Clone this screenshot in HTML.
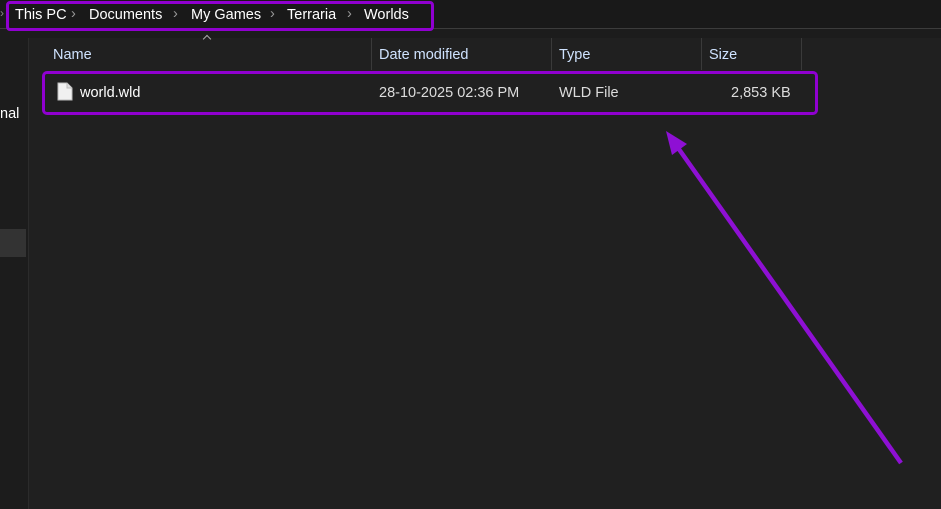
<!DOCTYPE html>
<html><head><style>
body{margin:0;width:941px;height:509px;background:#202020;font-family:"Liberation Sans",sans-serif;position:relative;overflow:hidden;color:#fff}
.a{position:absolute}
.t{font-size:14.5px;white-space:nowrap}
</style></head><body>
<div class="a" style="left:0;top:0;width:941px;height:29px;background:#191919"></div>
<div class="a" style="left:0;top:28px;width:941px;height:1px;background:#3c3c3c"></div>
<div class="a" style="left:0;top:29px;width:941px;height:9px;background:#1c1c1c"></div>
<div class="a" style="left:0;top:29px;width:28px;height:480px;background:#1c1c1c"></div>
<div class="a" style="left:28px;top:38px;width:1px;height:471px;background:#2b2b2b"></div>
<div class="a" style="left:0;top:229px;width:26px;height:28px;background:#333"></div>
<div class="a t" style="left:0;top:106px;color:#fff">nal</div>
<div class="a t" style="left:0;top:6px;color:#888;font-size:12px">›</div>
<div class="a" style="left:6px;top:1px;width:422px;height:24px;border:3px solid #9000d0;border-radius:4px"></div>
<div class="a t" style="left:15px;top:7px">This PC</div>
<div class="a t" style="left:71px;top:6px;color:#999">›</div>
<div class="a t" style="left:89px;top:7px">Documents</div>
<div class="a t" style="left:173px;top:6px;color:#999">›</div>
<div class="a t" style="left:191px;top:7px">My Games</div>
<div class="a t" style="left:270px;top:6px;color:#999">›</div>
<div class="a t" style="left:287px;top:7px">Terraria</div>
<div class="a t" style="left:347px;top:6px;color:#999">›</div>
<div class="a t" style="left:364px;top:7px">Worlds</div>
<div class="a" style="left:204px;top:36px;width:5px;height:5px;border-left:1px solid #aaa;border-top:1px solid #aaa;transform:rotate(45deg)"></div>
<div class="a" style="left:371px;top:38px;width:1px;height:32px;background:#3a3a3a"></div>
<div class="a" style="left:551px;top:38px;width:1px;height:32px;background:#3a3a3a"></div>
<div class="a" style="left:701px;top:38px;width:1px;height:32px;background:#3a3a3a"></div>
<div class="a" style="left:801px;top:38px;width:1px;height:32px;background:#3a3a3a"></div>
<div class="a t" style="left:53px;top:47px;color:#cfe3ff">Name</div>
<div class="a t" style="left:379px;top:47px;color:#cfe3ff">Date modified</div>
<div class="a t" style="left:559px;top:47px;color:#cfe3ff">Type</div>
<div class="a t" style="left:709px;top:47px;color:#cfe3ff">Size</div>
<div class="a" style="left:42px;top:71px;width:770px;height:38px;border:3px solid #9000d0;border-radius:5px"></div>
<svg class="a" style="left:57px;top:82px" width="16" height="19"><path d="M1 1H10L15 6V18H1Z" fill="#f0f0f0" stroke="#bbb"/><path d="M10 1V6H15" fill="#ddd" stroke="#bbb"/></svg>
<div class="a t" style="left:80px;top:85px">world.wld</div>
<div class="a t" style="left:379px;top:85px;color:#ddd">28-10-2025 02:36 PM</div>
<div class="a t" style="left:559px;top:85px;color:#ddd">WLD File</div>
<div class="a t" style="left:731px;top:85px;color:#ddd">2,853 KB</div>
<svg class="a" style="left:0;top:0" width="941" height="509"><line x1="901" y1="463" x2="676" y2="145" stroke="#8e10d4" stroke-width="4.5"/><polygon points="666,131 672,155 687,144" fill="#8e10d4"/></svg>
</body></html>
